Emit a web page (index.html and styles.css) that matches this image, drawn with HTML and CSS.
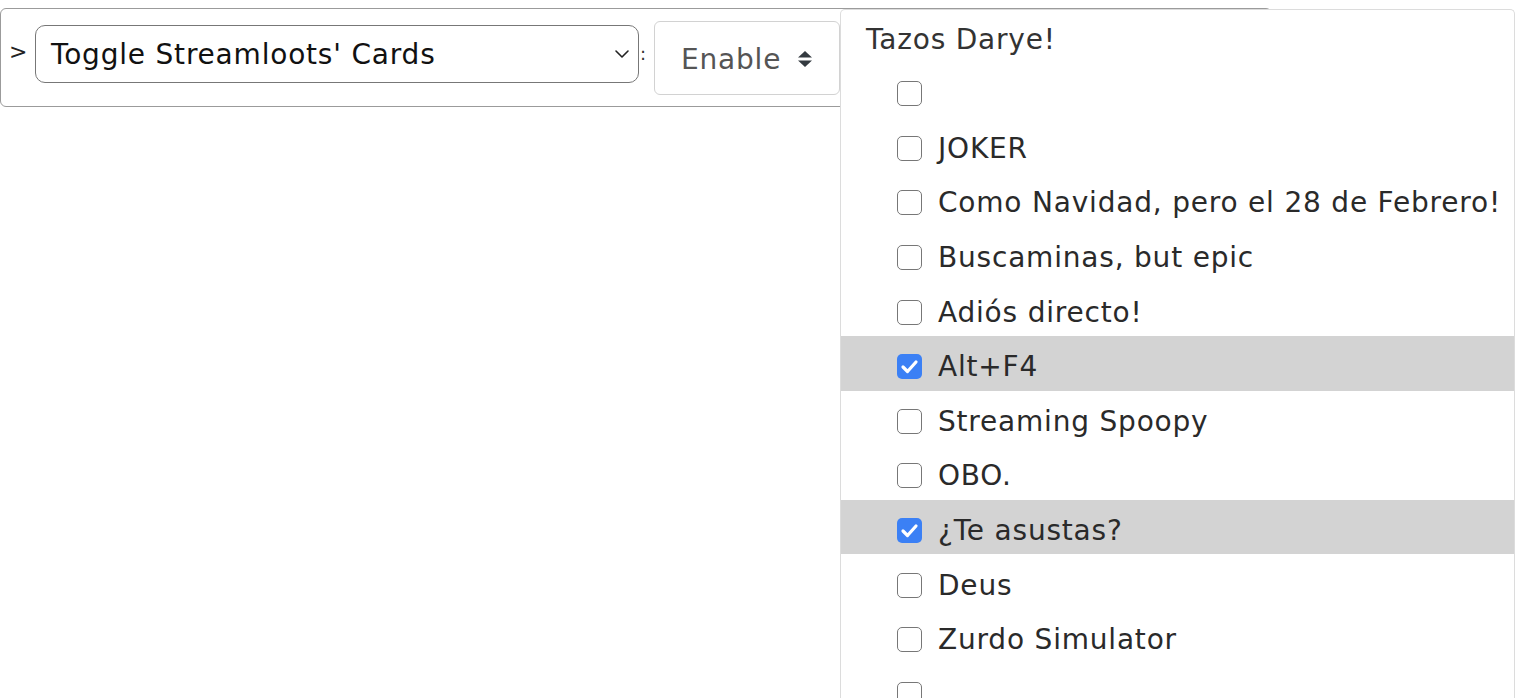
FILE: index.html
```html
<!DOCTYPE html>
<html lang="es">
<head>
<meta charset="utf-8">
<title>Toggle Streamloots' Cards</title>
<link rel="stylesheet" href="styles.css">
</head>
<body>
<div class="action-row">
  <span class="prompt">&gt;</span>
  <div class="select-box">
    <span class="select-text">Toggle Streamloots' Cards</span>
    <svg class="chevron" width="16" height="10" viewBox="0 0 16 10"><path d="M2 2 L8 8 L14 2" fill="none" stroke="#222" stroke-width="1.6" stroke-linecap="round" stroke-linejoin="round"/></svg>
  </div>
  <span class="colon">:</span>
  <div class="enable-box">
    <span class="enable-text">Enable</span>
    <svg class="updown" width="16" height="18" viewBox="0 0 16 18"><path d="M8 1 L15 7.6 L1 7.6 Z" fill="#343a40"/><path d="M1 10.4 L15 10.4 L8 17 Z" fill="#343a40"/></svg>
  </div>
  <div class="multi-wrap">
    <div class="dropdown">
      <div class="dd-header">Tazos Darye!</div>
      <label class="dd-item"><span class="box"></span><span class="label"></span></label>
      <label class="dd-item"><span class="box"></span><span class="label">JOKER</span></label>
      <label class="dd-item"><span class="box"></span><span class="label">Como Navidad, pero el 28 de Febrero!</span></label>
      <label class="dd-item"><span class="box"></span><span class="label">Buscaminas, but epic</span></label>
      <label class="dd-item"><span class="box"></span><span class="label">Adiós directo!</span></label>
      <label class="dd-item selected"><span class="box checked"><svg width="25" height="25" viewBox="0 0 25 25"><path d="M6 13 L10.5 17.5 L19 8" fill="none" stroke="#fff" stroke-width="3.2" stroke-linecap="round" stroke-linejoin="round"/></svg></span><span class="label">Alt+F4</span></label>
      <label class="dd-item"><span class="box"></span><span class="label">Streaming Spoopy</span></label>
      <label class="dd-item"><span class="box"></span><span class="label">OBO.</span></label>
      <label class="dd-item selected"><span class="box checked"><svg width="25" height="25" viewBox="0 0 25 25"><path d="M6 13 L10.5 17.5 L19 8" fill="none" stroke="#fff" stroke-width="3.2" stroke-linecap="round" stroke-linejoin="round"/></svg></span><span class="label">¿Te asustas?</span></label>
      <label class="dd-item"><span class="box"></span><span class="label">Deus</span></label>
      <label class="dd-item"><span class="box"></span><span class="label">Zurdo Simulator</span></label>
      <label class="dd-item"><span class="box"></span><span class="label"></span></label>
    </div>
  </div>
</div>
</body>
</html>
```

FILE: styles.css
```css
html {
  overflow: hidden;
}

html, body {
  margin: 0;
  padding: 0;
  height: 698px;
  background: #fff;
}

body {
  font-family: "DejaVu Sans", "Open Sans", sans-serif;
  font-size: 28px;
  letter-spacing: 0.8px;
  color: #222;
}

.action-row {
  display: flex;
  align-items: flex-start;
  box-sizing: border-box;
  width: 1272px;
  height: 99px;
  margin-top: 8px;
  padding-left: 8px;
  border: 1px solid #9b9b9b;
  border-radius: 6px;
}

.prompt {
  margin-top: 16px;
  width: 26px;
  line-height: 54px;
  font-size: 22px;
  color: #222;
}

.select-box {
  display: flex;
  align-items: center;
  justify-content: space-between;
  box-sizing: border-box;
  width: 604px;
  height: 58px;
  margin-top: 16px;
  padding: 0 8px 0 15px;
  border: 1.5px solid #777;
  border-radius: 10px;
  color: #111;
}

.select-text {
  line-height: 1;
  padding-top: 2px;
}

.colon {
  margin-top: 16px;
  width: 15px;
  line-height: 58px;
  font-size: 18px;
  text-indent: 1px;
  color: #333;
}

.enable-box {
  display: flex;
  align-items: center;
  box-sizing: border-box;
  width: 186px;
  height: 74px;
  margin-top: 12px;
  padding: 2px 0 0 26px;
  border: 1px solid #d2d2d2;
  border-radius: 6px;
  color: #555;
}

.enable-text {
  width: 116px;
}

.multi-wrap {
  position: relative;
  align-self: stretch;
  flex: 1;
}

.dropdown {
  position: absolute;
  top: 0;
  left: 0;
  z-index: 2;
  box-sizing: border-box;
  width: 675px;
  height: 689px;
  overflow: hidden;
  background: #fff;
  border: 1px solid #dcdcdc;
  border-bottom: none;
  border-radius: 5px 5px 0 0;
}

.dd-header {
  height: 53px;
  padding: 6px 0 0 25px;
  box-sizing: border-box;
  display: flex;
  align-items: center;
  color: #333;
}

.dd-item {
  display: flex;
  align-items: center;
  box-sizing: border-box;
  height: 54.6px;
  padding: 7px 0 0 56px;
  color: #2a2a2a;
}

.dd-item.selected {
  background: #d3d3d3;
}

.box {
  flex: none;
  box-sizing: border-box;
  width: 25px;
  height: 25px;
  margin-right: 16px;
  border: 1.5px solid #777;
  border-radius: 5px;
  background: #fff;
}

.box.checked {
  border: none;
  background: #3b80f5;
}

.box svg {
  display: block;
}
```
